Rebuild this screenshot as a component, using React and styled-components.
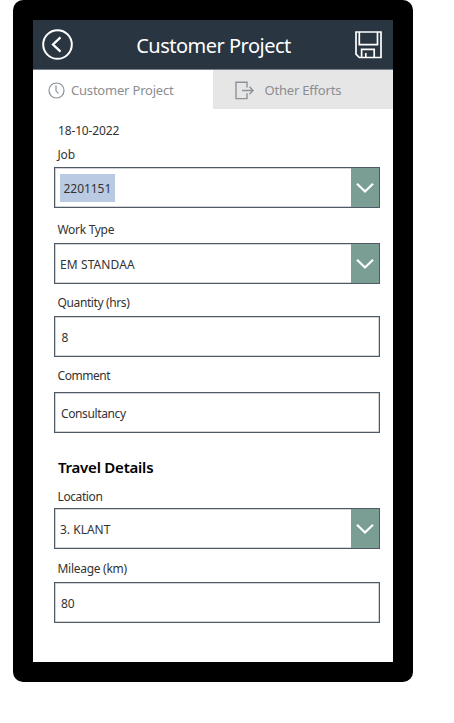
import React from "react";
import styled, { createGlobalStyle } from "styled-components";

const GlobalStyle = createGlobalStyle`
  * { box-sizing: border-box; }
  body { margin: 0; background: #fff; font-family: "Noto Sans", "Open Sans", sans-serif; }
`;

const Device = styled.div`
  width: 400px;
  height: 682px;
  margin-left: 13px;
  padding: 20px;
  background: #000;
  border-radius: 10px;
`;

const Screen = styled.main`
  height: 642px;
  background: #fff;
`;

const Header = styled.header`
  display: flex;
  align-items: center;
  justify-content: space-between;
  height: 50px;
  padding: 0 11px 0 9px;
  background: #293541;
  border-bottom: 1px solid #77808a;
`;

const Title = styled.h1`
  margin: 3px 2px 0 0;
  color: #fff;
  font-size: 20px;
  font-weight: 400;
  line-height: 28px;
  letter-spacing: -0.5px;
  white-space: nowrap;
`;

const IconButton = styled.button`
  display: flex;
  padding: 0;
  border: 0;
  background: none;
  color: #fff;
`;

const Tabs = styled.nav`
  display: flex;
  height: 39px;
`;

const Tab = styled.div`
  display: flex;
  align-items: center;
  gap: ${(p) => p.$gap}px;
  width: ${(p) => p.$width}px;
  padding-top: 1px;
  padding-left: ${(p) => p.$inset}px;
  background: ${(p) => (p.$active ? "#fff" : "#e6e6e6")};
  color: #8b8d90;
  font-size: 13px;
  letter-spacing: -0.2px;
  white-space: nowrap;
  svg { color: #8b9299; }
`;

const Form = styled.form`
  padding: 12px 13px 0 21px;
`;

const DateText = styled.div`
  padding-left: 4px;
  color: #333;
  font-size: 12px;
  line-height: 20px;
  letter-spacing: -0.15px;
`;

const Label = styled.label`
  display: block;
  margin-top: ${(p) => p.$top}px;
  margin-bottom: ${(p) => p.$bottom}px;
  padding-left: 3.5px;
  color: #333;
  font-size: 12px;
  line-height: 20px;
  letter-spacing: ${(p) => p.$spacing || 0}px;
`;

const Control = styled.div`
  display: flex;
  align-items: center;
  justify-content: space-between;
  width: 326px;
  height: 41px;
  padding-left: ${(p) => p.$inset}px;
  border: 1px solid #4f5a66;
  box-shadow: inset 0 0 0 0.5px #a3a9af;
`;

const Value = styled.span`
  margin-top: 2px;
  color: #333;
  font-size: 12px;
  line-height: 20px;
  letter-spacing: ${(p) => p.$spacing || 0}px;
`;

const Selected = styled(Value)`
  width: 55px;
  height: 28px;
  margin-top: 0;
  padding-left: 3.5px;
  line-height: 29px;
  background: #b9cae2;
`;

const DropButton = styled.span`
  display: flex;
  align-items: center;
  justify-content: center;
  align-self: stretch;
  width: 28px;
  background: #7a9e93;
`;

const SectionTitle = styled.h2`
  margin: 24px 0 0;
  padding-left: 4px;
  color: #000;
  font-size: 15px;
  font-weight: 600;
  line-height: 20px;
  letter-spacing: -0.22px;
`;

const BackIcon = () => (
  <svg width="32" height="32" viewBox="0 0 32 32" fill="none" stroke="currentColor" strokeWidth="2">
    <circle cx="15.5" cy="15.5" r="14.3" />
    <path d="M18.5 8.3 11 15.5l7.5 7.2" strokeWidth="2.3" />
  </svg>
);

const SaveIcon = () => (
  <svg width="27" height="28" viewBox="0 0 27 28" fill="none" stroke="currentColor" strokeWidth="1.7">
    <path d="M1 1h25v25.5H4.3L1 23.2ZM4.3 1v12.7h18.2V1M6.6 26.5v-8.2h12.6v8.2M10.8 26.5v-4.5" />
  </svg>
);

const ClockIcon = () => (
  <svg width="17" height="17" viewBox="0 0 17 17" fill="none" stroke="currentColor" strokeWidth="1.2">
    <circle cx="8.5" cy="8.5" r="7.5" />
    <path d="M8 3.5v5.3l2.5 2.6" />
  </svg>
);

const ExitIcon = () => (
  <svg width="19" height="19" viewBox="0 0 19 19" fill="none" stroke="currentColor" strokeWidth="1.4">
    <path d="M12 6.5V1.2H1v16.4h11v-5.3M7 9.5h11M14.5 5.8l3.6 3.7-3.6 3.7" />
  </svg>
);

const Chevron = () => (
  <svg width="18" height="12" viewBox="0 0 18 12" fill="none" stroke="#fff" strokeWidth="2.3">
    <path d="m1 1.7 8 7.8 8-7.8" />
  </svg>
);

const Drop = () => (
  <DropButton><Chevron /></DropButton>
);

export default function App() {
  return (
    <>
      <GlobalStyle />
      <Device>
        <Screen>
          <Header>
            <IconButton type="button" aria-label="Back"><BackIcon /></IconButton>
            <Title>Customer Project</Title>
            <IconButton type="button" aria-label="Save"><SaveIcon /></IconButton>
          </Header>
          <Tabs>
            <Tab $active $width={179.5} $inset={15} $gap={6}><ClockIcon />Customer Project</Tab>
            <Tab $width={180.5} $inset={22} $gap={11}><ExitIcon />Other Efforts</Tab>
          </Tabs>
          <Form>
            <DateText>18-10-2022</DateText>
            <Label $top={4} $bottom={2} $spacing={-0.2}>Job</Label>
            <Control $inset={5}><Selected $spacing={-0.05}>2201151</Selected><Drop /></Control>
            <Label $top={12} $bottom={3} $spacing={-0.3}>Work Type</Label>
            <Control $inset={5}><Value $spacing={0.1}>EM STANDAA</Value><Drop /></Control>
            <Label $top={9} $bottom={3} $spacing={-0.38}>Quantity (hrs)</Label>
            <Control $inset={6.5}><Value>8</Value></Control>
            <Label $top={9} $bottom={6} $spacing={-0.45}>Comment</Label>
            <Control $inset={6}><Value $spacing={-0.38}>Consultancy</Value></Control>
            <SectionTitle>Travel Details</SectionTitle>
            <Label $top={10} $bottom={1} $spacing={-0.4}>Location</Label>
            <Control $inset={5}><Value>3. KLANT</Value><Drop /></Control>
            <Label $top={10} $bottom={3} $spacing={-0.28}>Mileage (km)</Label>
            <Control $inset={6}><Value $spacing={-0.2}>80</Value></Control>
          </Form>
        </Screen>
      </Device>
    </>
  );
}
